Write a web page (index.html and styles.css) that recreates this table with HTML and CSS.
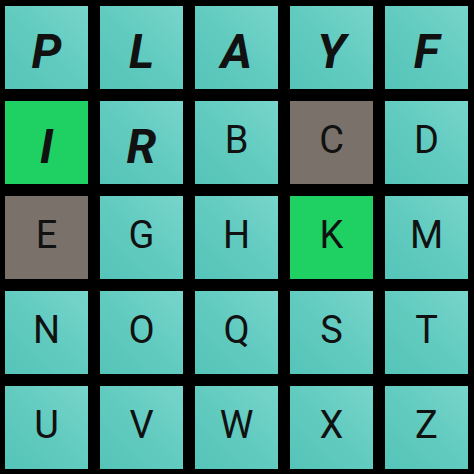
FILE: index.html
```html
<!DOCTYPE html>
<html>
<head>
<meta charset="utf-8">
<link rel="stylesheet" href="styles.css">
</head>
<body>
<div class="board">
  <div class="cell key">P</div>
  <div class="cell key">L</div>
  <div class="cell key">A</div>
  <div class="cell key">Y</div>
  <div class="cell key">F</div>
  <div class="cell key hit">I</div>
  <div class="cell key">R</div>
  <div class="cell">B</div>
  <div class="cell miss">C</div>
  <div class="cell">D</div>
  <div class="cell miss">E</div>
  <div class="cell">G</div>
  <div class="cell">H</div>
  <div class="cell hit">K</div>
  <div class="cell">M</div>
  <div class="cell">N</div>
  <div class="cell">O</div>
  <div class="cell">Q</div>
  <div class="cell">S</div>
  <div class="cell">T</div>
  <div class="cell">U</div>
  <div class="cell">V</div>
  <div class="cell">W</div>
  <div class="cell">X</div>
  <div class="cell">Z</div>
</div>
</body>
</html>
```
FILE: styles.css
```css
html, body {
  margin: 0;
  padding: 0;
  background: #000;
  width: 474px;
  height: 474px;
  overflow: hidden;
}
.board {
  display: grid;
  grid-template-columns: repeat(5, 83px);
  grid-template-rows: repeat(5, 83px);
  gap: 12px;
  padding: 6px 6px 5px 5px;
}
.cell {
  display: flex;
  align-items: center;
  justify-content: center;
  background: linear-gradient(45deg, #55c4b8 0%, #62cbc0 50%, #78d5cb 100%);
  color: #111;
  font-family: Roboto, "Liberation Sans", sans-serif;
  font-size: 38px;
  font-weight: 400;
  padding-bottom: 6px;
  box-sizing: border-box;
}
.key {
  font-weight: 700;
  font-style: italic;
  font-size: 48px;
  padding-bottom: 0;
  padding-top: 8px;
}
.hit {
  background: #1fd062;
}
.miss {
  background: #7a716a;
}
```
